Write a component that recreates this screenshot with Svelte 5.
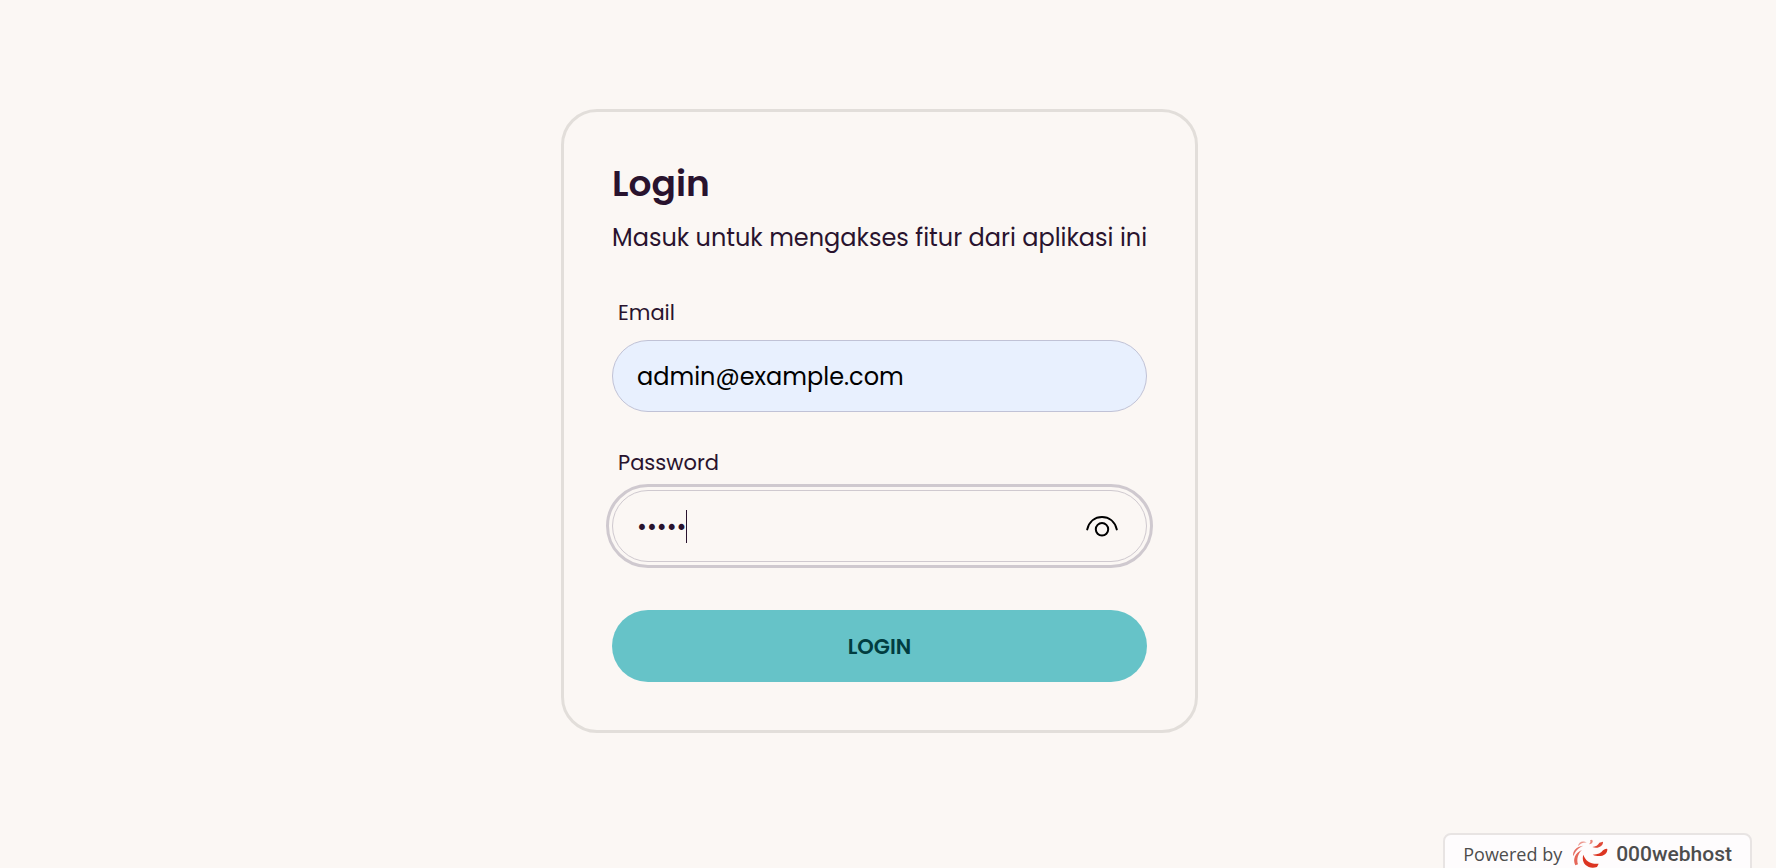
<script>
  let email = $state('admin@example.com');
  let password = $state('admin');
  let visible = $state(false);
</script>

<main>
  <form class="card" onsubmit={(event) => event.preventDefault()}>
    <h1>Login</h1>
    <p class="intro">Masuk untuk mengakses fitur dari aplikasi ini</p>

    <div class="field">
      <label for="email">Email</label>
      <input id="email" class="filled" type="email" bind:value={email} />
    </div>

    <div class="field">
      <label for="password">Password</label>
      <div class="control">
        <input id="password" class="active" type={visible ? 'text' : 'password'} bind:value={password} />
        <span class="caret"></span>
        <button class="toggle" type="button" aria-label="Show password" onclick={() => (visible = !visible)}>
          <svg viewBox="0 0 36 36" width="36" height="36" fill="none" stroke="#000" stroke-width="2" stroke-linecap="round">
            <path d="M3.200 21.400C5.200 13.500 11 9 18 9S30.800 13.500 32.800 21.400" />
            <circle cx="18" cy="21.300" r="6.200" />
          </svg>
        </button>
      </div>
    </div>

    <button class="submit" type="submit">LOGIN</button>
  </form>
</main>

<a class="badge" href="#top">
  <span class="powered">Powered by</span>
  <svg viewBox="0 0 108 90" width="36" height="30" fill="#dc3522">
    <path d="M106 30C107 49 84 57 62 47C78 47 88 42 93 34Q100 28 106 30Z" />
    <path d="M93 8C94 22 77 30 61 24C71 23 79 18 82 11Z" opacity=".9" />
    <path d="M60 2C65 8 61 14 51 16C55 12 57 7 54 4Z" opacity=".6" />
    <path d="M34 47C40 66 56 76 80 74L75 84C48 92 26 74 34 47Z" />
    <path d="M30 33C18 43 13 61 18 76L10 79C1 61 9 42 30 33Z" opacity=".75" />
    <path d="M34 20C20 26 10 35 4 52C0 37 13 22 34 20Z" opacity=".7" />
    <path d="M45 11C34 9 25 14 18 22C20 9 32 3 45 11Z" opacity=".5" />
  </svg>
  <span class="host">000webhost</span>
</a>

<style>
  :global(body) {
    margin: 0;
    background: #fbf7f4;
    color: #29132e;
    font-family: Poppins, Inter, sans-serif;
  }

  main {
    display: flex;
    justify-content: center;
    padding: 109px 17px 24px 0;
  }

  .card {
    box-sizing: border-box;
    width: 637px;
    max-width: 100%;
    padding: 48px;
    border: 3px solid #e2deda;
    border-radius: 36px;
  }

  h1 {
    margin: 0;
    font-size: 36px;
    line-height: 48px;
    font-weight: 600;
  }

  .intro {
    margin: 12px 0 42px;
    font-size: 24px;
    line-height: 36px;
    white-space: nowrap;
  }

  .field {
    display: flex;
    flex-direction: column;
    gap: 12px;
    margin-bottom: 36px;
  }

  .field + .submit {
    margin-top: 48px;
  }

  label {
    padding-left: 6px;
    font-size: 21px;
    line-height: 30px;
  }

  .control {
    position: relative;
  }

  input {
    box-sizing: border-box;
    display: block;
    width: 100%;
    height: 72px;
    padding: 0 24px;
    border: 1px solid #cfc9cf;
    border-radius: 36px;
    background: transparent;
    color: inherit;
    font: inherit;
    font-size: 24px;
  }

  .filled {
    border-color: #c0c2d6;
    background: #e8f0fe;
    color: #000;
  }

  .active {
    outline: 3px solid #cfc9cf;
    outline-offset: 3px;
    caret-color: transparent;
  }

  .caret {
    position: absolute;
    left: 74px;
    top: 20px;
    width: 1px;
    height: 33px;
    background: #29132e;
  }

  .toggle {
    position: absolute;
    top: 18px;
    right: 27px;
    width: 36px;
    height: 36px;
    padding: 0;
    border: 0;
    background: none;
    cursor: pointer;
  }

  svg {
    display: block;
  }

  .submit {
    display: block;
    width: 100%;
    height: 72px;
    border: 0;
    border-radius: 36px;
    background: #66c3c8;
    color: #013d40;
    font: inherit;
    font-size: 21px;
    font-weight: 600;
    cursor: pointer;
  }

  .badge {
    position: fixed;
    right: 24px;
    bottom: -8px;
    box-sizing: border-box;
    display: flex;
    align-items: center;
    height: 43px;
    padding: 0 18px 2px;
    border: 2px solid #e8e4e3;
    border-radius: 8px;
    background: #fefcfd;
    color: #4d4d4d;
    font-family: "Open Sans", sans-serif;
    font-size: 18px;
    text-decoration: none;
  }

  .badge svg {
    margin: 0 8px 0 10px;
  }

  .powered {
    font-weight: 500;
  }

  .host {
    font-family: Roboto, "Open Sans", sans-serif;
    font-size: 21px;
    font-weight: 500;
  }
</style>
